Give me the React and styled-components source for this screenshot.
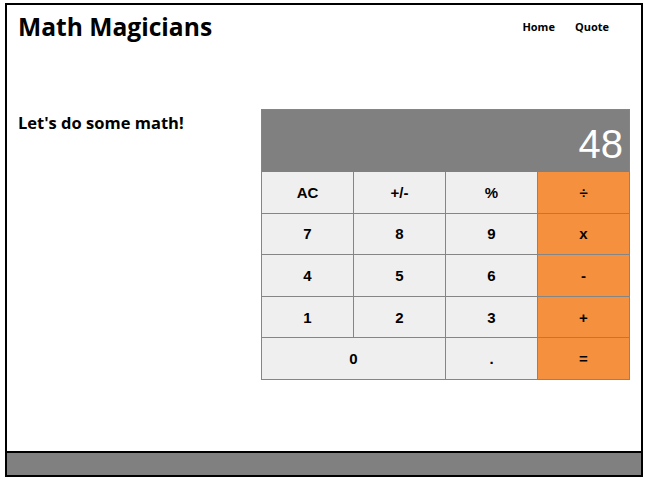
import React from 'react';
import styled, { createGlobalStyle } from 'styled-components';

const GlobalStyle = createGlobalStyle`
  body {
    margin: 0;
    background: #fff;
    font-family: 'Open Sans', 'Noto Sans', sans-serif;
  }
`;

const keys = [
  { label: 'AC' },
  { label: '+/-' },
  { label: '%' },
  { label: '÷', op: true },
  { label: '7' },
  { label: '8' },
  { label: '9' },
  { label: 'x', op: true },
  { label: '4' },
  { label: '5' },
  { label: '6' },
  { label: '-', op: true },
  { label: '1' },
  { label: '2' },
  { label: '3' },
  { label: '+', op: true },
  { label: '0', wide: true },
  { label: '.' },
  { label: '=', op: true },
];

const App = () => {
  return (
    <>
      <GlobalStyle />
      <Page>
        <Header>
          <Title>Math Magicians</Title>
          <Nav>
            <NavLink href="#">Home</NavLink>
            <NavLink href="#">Quote</NavLink>
          </Nav>
        </Header>
        <Main>
          <Intro>Let&apos;s do some math!</Intro>
          <Calculator>
            <Display>48</Display>
            <Keys>
              {keys.map((k) => (
                <Key key={k.label} $op={k.op} $wide={k.wide} type="button">
                  {k.label}
                </Key>
              ))}
            </Keys>
          </Calculator>
        </Main>
        <Footer />
      </Page>
    </>
  );
};

const Page = styled.div`
  box-sizing: border-box;
  margin: 3px 0 0 5px;
  width: 638px;
  height: 474px;
  border: 2px solid #000;
  display: flex;
  flex-direction: column;
`;

const Header = styled.header`
  box-sizing: border-box;
  display: flex;
  justify-content: space-between;
  align-items: flex-start;
  height: 42px;
  padding: 6px 32px 0 11px;
`;

const Title = styled.h1`
  margin: 0;
  font-size: 24.6px;
  font-weight: 700;
  color: #000;
  line-height: 32px;
`;

const Nav = styled.nav`
  display: flex;
  gap: 20px;
  padding-top: 8px;
`;

const NavLink = styled.a`
  font-size: 11px;
  font-weight: 700;
  color: #000;
  text-decoration: none;
`;

const Main = styled.main`
  flex: 1;
  display: flex;
  justify-content: space-between;
  align-items: flex-start;
  padding: 62px 11px 0 11px;
`;

const Intro = styled.h2`
  margin: 3px 0 0;
  font-size: 16.5px;
  font-weight: 700;
  line-height: 22px;
`;

const Calculator = styled.div`
  box-sizing: border-box;
  width: 369px;
  border: 1px solid #858585;
  font-family: 'Liberation Sans', Arial, sans-serif;
`;

const Display = styled.div`
  height: 62px;
  background: #808080;
  color: #fff;
  font-size: 40px;
  display: flex;
  align-items: center;
  justify-content: flex-end;
  padding: 6px 6px 0 0;
  box-sizing: border-box;
`;

const Keys = styled.div`
  display: grid;
  grid-template-columns: repeat(4, 1fr);
  grid-auto-rows: 40.6px;
  gap: 1px;
  background: #858585;
`;

const Key = styled.button`
  border: none;
  margin: 0;
  padding: 0;
  font-family: inherit;
  font-size: 15px;
  font-weight: 700;
  color: #000;
  background: ${(p) => (p.$op ? '#f5913e' : '#efefef')};
  grid-column: ${(p) => (p.$wide ? 'span 2' : 'auto')};
`;

const Footer = styled.footer`
  height: 22px;
  background: #808080;
  border-top: 2px solid #000;
`;

export default App;
